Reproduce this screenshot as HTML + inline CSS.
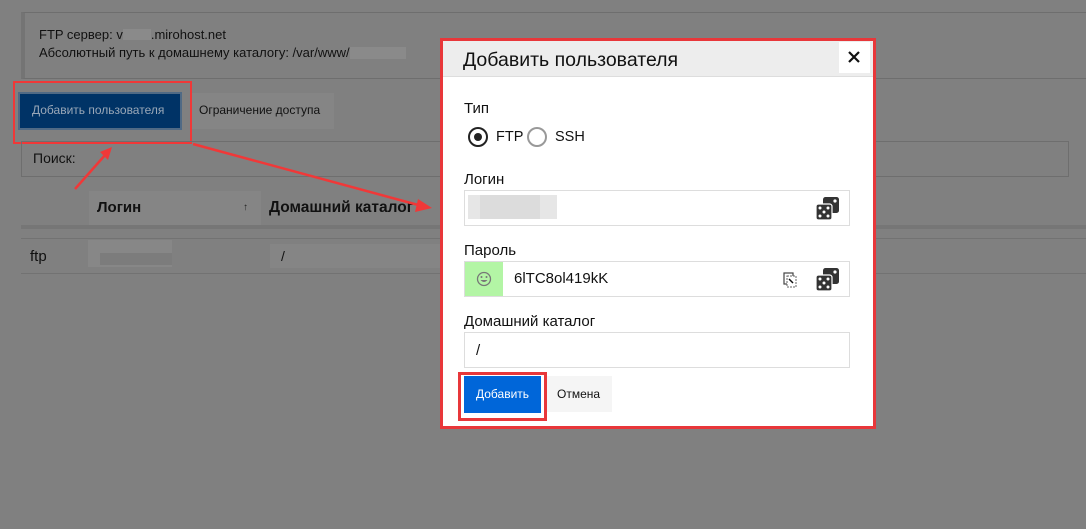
<!DOCTYPE html>
<html><head><meta charset="utf-8"><style>
*{box-sizing:border-box;margin:0;padding:0}
body{width:1086px;height:529px;background:#808080;font-family:"Liberation Sans","DejaVu Sans",sans-serif;position:relative;overflow:hidden;color:#111}
.a{position:absolute}
.t{position:absolute;white-space:nowrap}
</style></head><body>
<div class="a" style="left:21px;top:12px;width:1070px;height:67px;border-top:1px solid #6e6e6e;border-bottom:1px solid #6e6e6e;border-left:4px solid #747474;background:#808080"></div>
<div class="t" style="left:39px;top:27px;font-size:13px;color:#111">FTP сервер: v<span style="display:inline-block;width:28px;height:11px;background:#8a8a8a;vertical-align:-1px"></span>.mirohost.net</div>
<div class="t" style="left:39px;top:45px;font-size:13px;color:#111">Абсолютный путь к домашнему каталогу: /var/www/<span style="display:inline-block;width:56px;height:12px;background:#8a8a8a;vertical-align:-2px"></span></div>
<div class="a" style="left:18px;top:92px;width:164px;height:38px;background:#003366;border:2px solid #506a85"></div>
<div class="t" style="left:32px;top:103px;font-size:12px;color:#9aa8b8">Добавить пользователя</div>
<div class="a" style="left:192px;top:93px;width:142px;height:36px;background:#858585"></div>
<div class="t" style="left:199px;top:103px;font-size:12px;color:#111">Ограничение доступа</div>
<div class="a" style="left:13px;top:81px;width:179px;height:63px;border:2px solid #f03838"></div>
<div class="a" style="left:21px;top:141px;width:1048px;height:36px;border:1px solid #6e6e6e"></div>
<div class="t" style="left:33px;top:150px;font-size:14px;color:#111">Поиск:</div>
<div class="a" style="left:89px;top:191px;width:172px;height:35px;background:#858585"></div>
<div class="t" style="left:97px;top:199px;font-size:15px;font-weight:bold;color:#111">Логин</div>
<div class="t" style="left:243px;top:202px;font-size:10px;color:#222">↑</div>
<div class="t" style="left:269px;top:199px;font-size:15.5px;font-weight:bold;color:#111">Домашний каталог</div>
<div class="a" style="left:21px;top:225px;width:1070px;height:4px;background:#767676"></div>
<div class="a" style="left:21px;top:238px;width:1070px;height:1px;background:#727272"></div>
<div class="a" style="left:21px;top:273px;width:1070px;height:1px;background:#727272"></div>
<div class="t" style="left:30px;top:248px;font-size:15px;color:#111">ftp</div>
<div class="a" style="left:88px;top:240px;width:84px;height:27px;background:#878787"></div>
<div class="a" style="left:100px;top:253px;width:72px;height:12px;background:#7c7c7c"></div>
<div class="a" style="left:270px;top:244px;width:172px;height:24px;background:#858585"></div>
<div class="t" style="left:281px;top:248px;font-size:14px;color:#111">/</div>
<svg class="a" style="left:0;top:0" width="1086" height="529">
<g stroke="#f03838" stroke-width="2.5" fill="#f03838">
<line x1="75" y1="189" x2="106" y2="154"/>
<polygon points="112,147 100,152 108,160" stroke="none"/>
<line x1="193" y1="144" x2="422" y2="206"/>
<polygon points="432,208 418,199 415,212" stroke="none"/>
</g></svg>
<div class="a" style="left:440px;top:38px;width:436px;height:391px;border:3px solid #e8373a;background:#fff"></div>
<div class="a" style="left:443px;top:41px;width:430px;height:36px;background:#ededed;border-bottom:1px solid #ddd"></div>
<div class="t" style="left:463px;top:49px;font-size:19.5px;color:#111">Добавить пользователя</div>
<div class="a" style="left:839px;top:42px;width:31px;height:31px;background:#fff"></div>
<svg class="a" style="left:848px;top:51px" width="12" height="12"><path d="M1 1L11 11M11 1L1 11" stroke="#111" stroke-width="2.2"/></svg>
<div class="t" style="left:464px;top:100px;font-size:15px">Тип</div>
<div class="a" style="left:468px;top:127px;width:20px;height:20px;border:2px solid #222;border-radius:50%"></div>
<div class="a" style="left:474px;top:133px;width:8px;height:8px;background:#222;border-radius:50%"></div>
<div class="t" style="left:496px;top:129px;font-size:14.5px">FTP</div>
<div class="a" style="left:527px;top:127px;width:20px;height:20px;border:2px solid #999;border-radius:50%"></div>
<div class="t" style="left:555px;top:129px;font-size:14.5px">SSH</div>
<div class="t" style="left:464px;top:171px;font-size:15px">Логин</div>
<div class="a" style="left:464px;top:190px;width:386px;height:36px;border:1px solid #ddd"></div>
<div class="a" style="left:468px;top:195px;width:89px;height:24px;background:#e6e6e6"></div>
<div class="a" style="left:480px;top:195px;width:60px;height:24px;background:#dcdcdc"></div>
<div class="t" style="left:464px;top:242px;font-size:15px">Пароль</div>
<div class="a" style="left:464px;top:261px;width:386px;height:36px;border:1px solid #ddd"></div>
<div class="a" style="left:465px;top:262px;width:38px;height:34px;background:#b3f5a5"></div>
<svg class="a" style="left:476px;top:271px" width="16" height="16"><circle cx="8" cy="8" r="6.5" fill="none" stroke="#777" stroke-width="1.3"/><circle cx="5.5" cy="6" r="1" fill="#777"/><circle cx="10.5" cy="6" r="1" fill="#777"/><path d="M4.5 9 Q8 13 11.5 9Z" fill="#777"/></svg>
<div class="t" style="left:514px;top:270px;font-size:15px">6lTC8ol419kK</div>
<svg class="a" style="left:783px;top:272px" width="14" height="16"><rect x="1" y="1" width="9" height="11" fill="none" stroke="#444" stroke-width="1.2"/><rect x="4" y="4" width="9" height="11" fill="#fff" stroke="#666" stroke-width="1" stroke-dasharray="2 1"/><path d="M6 7 L10 11" stroke="#111" stroke-width="1.5"/></svg>
<div class="t" style="left:464px;top:313px;font-size:15px">Домашний каталог</div>
<div class="a" style="left:464px;top:332px;width:386px;height:36px;border:1px solid #ddd"></div>
<div class="t" style="left:476px;top:342px;font-size:15px">/</div>
<svg class="a" style="left:815px;top:196px" width="26" height="26"><rect x="8" y="1" width="16" height="16" rx="2.5" fill="#333"/><circle cx="20" cy="5" r="1.6" fill="#fff"/><rect x="1" y="8" width="16" height="16" rx="2.5" fill="#333" stroke="#fff" stroke-width="1.2"/><circle cx="5" cy="12" r="1.5" fill="#fff"/><circle cx="13" cy="12" r="1.5" fill="#fff"/><circle cx="9" cy="16" r="1.5" fill="#fff"/><circle cx="5" cy="20" r="1.5" fill="#fff"/><circle cx="13" cy="20" r="1.5" fill="#fff"/></svg>
<svg class="a" style="left:815px;top:267px" width="26" height="26"><rect x="8" y="1" width="16" height="16" rx="2.5" fill="#333"/><circle cx="20" cy="5" r="1.6" fill="#fff"/><rect x="1" y="8" width="16" height="16" rx="2.5" fill="#333" stroke="#fff" stroke-width="1.2"/><circle cx="5" cy="12" r="1.5" fill="#fff"/><circle cx="13" cy="12" r="1.5" fill="#fff"/><circle cx="9" cy="16" r="1.5" fill="#fff"/><circle cx="5" cy="20" r="1.5" fill="#fff"/><circle cx="13" cy="20" r="1.5" fill="#fff"/></svg>
<div class="a" style="left:546px;top:376px;width:66px;height:36px;background:#f5f5f5"></div>
<div class="t" style="left:557px;top:387px;font-size:12px;color:#111">Отмена</div>
<div class="a" style="left:458px;top:372px;width:89px;height:49px;border:3px solid #e8373a"></div>
<div class="a" style="left:464px;top:376px;width:77px;height:37px;background:#0066d9"></div>
<div class="t" style="left:476px;top:387px;font-size:12px;color:#fff">Добавить</div>
</body></html>
